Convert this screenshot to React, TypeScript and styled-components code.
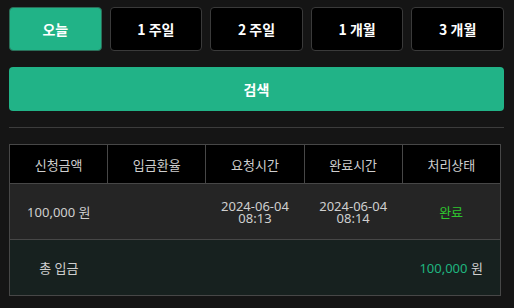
import React from "react";
import styled, { createGlobalStyle } from "styled-components";

const Global = createGlobalStyle`
  html, body { margin: 0; padding: 0; background: #151515; }
  body { font-family: "Noto Sans", "Noto Sans CJK KR", sans-serif; }
`;

const Page = styled.div`
  padding: 7px 10px 0 9px;
  display: flex;
  flex-direction: column;
`;

const Periods = styled.div`
  display: grid;
  grid-template-columns: repeat(5, 1fr);
  gap: 8px;
`;

const PeriodButton = styled.button<{ $active?: boolean }>`
  height: 44px;
  border-radius: 4px;
  border: 1px solid ${(p) => (p.$active ? "#2a6e58" : "#3a3a3a")};
  background: ${(p) => (p.$active ? "#21b387" : "#000")};
  color: #fff;
  font-family: "Noto Sans CJK KR", "Noto Sans", sans-serif;
  font-weight: 700;
  font-size: 14px;
  padding: 0;
`;

const SearchButton = styled.button`
  margin-top: 16px;
  height: 44px;
  border: none;
  border-radius: 4px;
  background: #21b387;
  color: #fff;
  font-family: "Noto Sans CJK KR", "Noto Sans", sans-serif;
  font-weight: 700;
  font-size: 14px;
`;

const Divider = styled.hr`
  margin: 16px 0 0;
  border: none;
  border-top: 1px solid #3c3c3c;
  height: 0;
`;

const Table = styled.table`
  margin-top: 16px;
  width: 492px;
  border-collapse: collapse;
  table-layout: fixed;
  border: 1px solid #474747;
  font-family: "Noto Sans", "Noto Sans CJK KR", sans-serif;
  font-size: 13px;
  color: #cfcfcf;
`;

const Th = styled.th`
  height: 38px;
  background: #000;
  border: 1px solid #474747;
  font-weight: 400;
  padding: 0;
`;

const Row = styled.tr<{ $total?: boolean }>`
  background: ${(p) => (p.$total ? "#17211f" : "#252525")};
  border-top: 1px solid #474747;
`;

const Td = styled.td<{ $color?: string }>`
  height: 55px;
  padding: 0;
  text-align: center;
  line-height: 12px;
  color: ${(p) => p.$color || "#cfcfcf"};
`;

const Won = styled.span`
  color: #cfcfcf;
`;

export default function App() {
  const periods = ["오늘", "1 주일", "2 주일", "1 개월", "3 개월"];
  return (
    <>
      <Global />
      <Page>
        <Periods>
          {periods.map((p, i) => (
            <PeriodButton key={p} $active={i === 0}>
              {p}
            </PeriodButton>
          ))}
        </Periods>
        <SearchButton>검색</SearchButton>
        <Divider />
        <Table>
          <thead>
            <tr>
              <Th>신청금액</Th>
              <Th>입금환율</Th>
              <Th>요청시간</Th>
              <Th>완료시간</Th>
              <Th>처리상태</Th>
            </tr>
          </thead>
          <tbody>
            <Row>
              <Td>100,000 원</Td>
              <Td></Td>
              <Td>
                2024-06-04
                <br />
                08:13
              </Td>
              <Td>
                2024-06-04
                <br />
                08:14
              </Td>
              <Td $color="#2ec52e">완료</Td>
            </Row>
            <Row $total>
              <Td>총 입금</Td>
              <Td></Td>
              <Td></Td>
              <Td></Td>
              <Td $color="#1fb57f">
                100,000 <Won>원</Won>
              </Td>
            </Row>
          </tbody>
        </Table>
      </Page>
    </>
  );
}
